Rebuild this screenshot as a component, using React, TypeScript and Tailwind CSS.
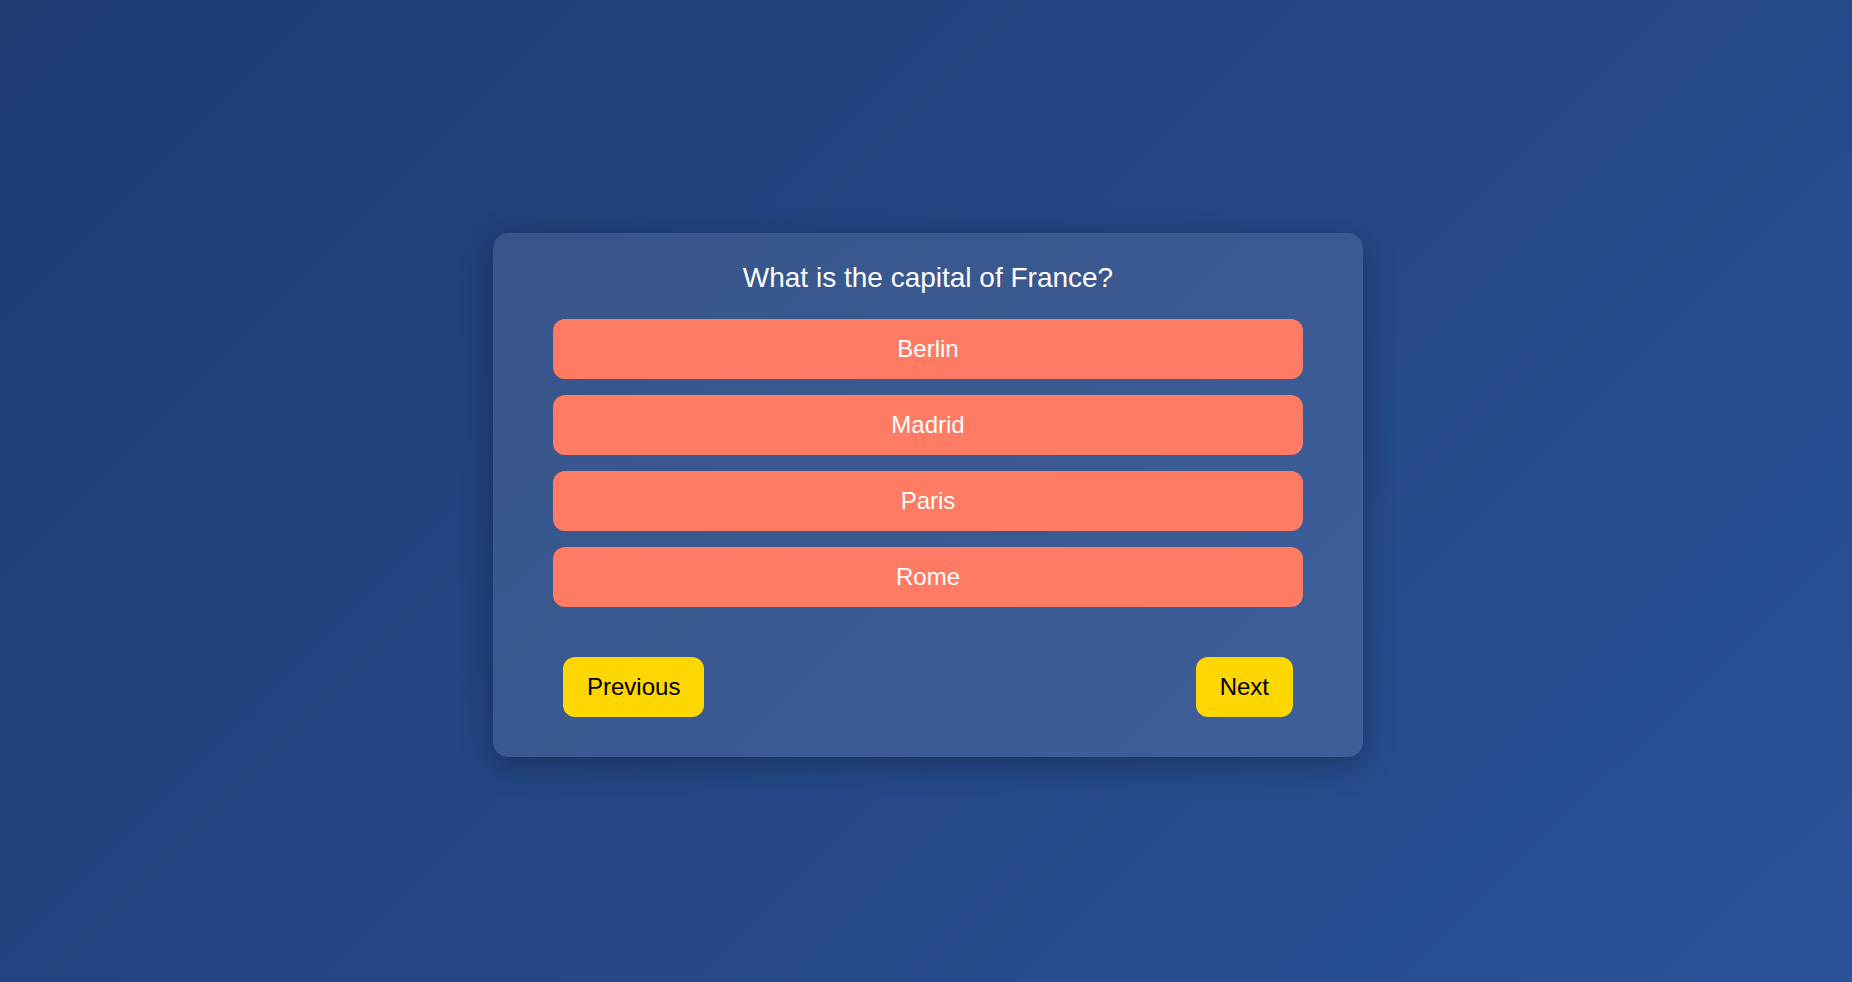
import { useState } from 'react';

const ANSWERS = ['Berlin', 'Madrid', 'Paris', 'Rome'];

export default function App() {
  const [picked, setPicked] = useState<string | null>(null);

  return (
    <div
      className="min-h-screen w-full flex items-center justify-center pt-[8px] pl-[4px] bg-[linear-gradient(135deg,#1e3c72,#2a5298)]"
      style={{ fontFamily: '"Liberation Sans", Arial, sans-serif' }}
    >
      <div className="w-[870px] rounded-[15px] bg-white/10 pt-[29px] pb-[40px] shadow-[0_8px_32px_rgba(0,0,0,0.3)]">
        <h2 className="text-center text-[28px] leading-[32px] text-white">What is the capital of France?</h2>

        <div className="mt-[25px] flex flex-col gap-4 px-[60px]">
          {ANSWERS.map((a) => (
            <button
              key={a}
              onClick={() => setPicked(a)}
              className={`h-[60px] w-full rounded-xl text-[24px] leading-[28px] text-white ${
                picked === a ? 'bg-[#ff6a50]' : 'bg-[#ff7b64]'
              }`}
            >
              {a}
            </button>
          ))}
        </div>

        <div className="mt-[50px] flex justify-between px-[70px]">
          <button className="h-[60px] rounded-xl bg-[#ffd700] px-6 text-[24px] leading-[28px] text-black">Previous</button>
          <button className="h-[60px] rounded-xl bg-[#ffd700] px-6 text-[24px] leading-[28px] text-black">Next</button>
        </div>
      </div>
    </div>
  );
}
